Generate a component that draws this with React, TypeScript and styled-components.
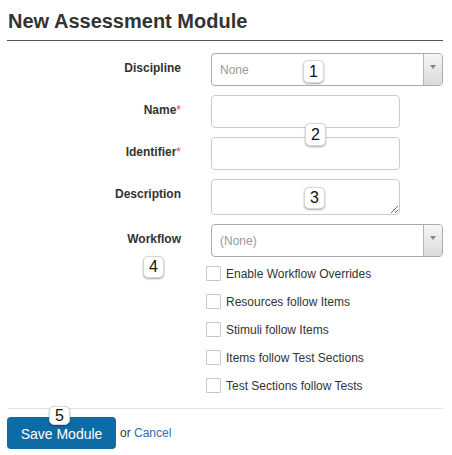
import React from "react";
import styled, { createGlobalStyle } from "styled-components";

const GlobalStyle = createGlobalStyle`
  body {
    margin: 0;
    background: #fff;
    font-family: "Liberation Sans", Arial, sans-serif;
    color: #333;
  }
`;

const Page = styled.div`
  position: relative;
  width: 436px;
  padding: 0 9px 0 7px;
`;

const Title = styled.h1`
  margin: 0;
  padding: 9px 0 7px 1px;
  font-size: 20px;
  line-height: 24px;
  font-weight: bold;
  color: #333;
  border-bottom: 1px solid #555;
`;

const Form = styled.div`
  display: grid;
  grid-template-columns: 174px 232px;
  column-gap: 30px;
  row-gap: 9px;
  margin-top: 12px;
`;

const Label = styled.label`
  justify-self: end;
  padding-top: 7px;
  font-size: 12px;
  line-height: 16px;
  font-weight: bold;
  color: #333;
`;

const Required = styled.span`
  color: #e0474c;
  font-weight: normal;
`;

const SelectBox = styled.div`
  display: flex;
  height: 33px;
  box-sizing: border-box;
  border: 1px solid #aaa;
  border-radius: 4px;
  overflow: hidden;
`;

const SelectValue = styled.span`
  flex: 1;
  display: flex;
  align-items: center;
  padding-left: 8px;
  font-size: 12px;
  color: #999;
`;

const SelectArrow = styled.span`
  width: 19px;
  display: flex;
  justify-content: center;
  padding-top: 11px;
  box-sizing: border-box;
  border-left: 1px solid #b5b5b5;
  background: linear-gradient(#f6f6f6, #dadada);

  &::after {
    content: "";
    width: 0;
    height: 0;
    border-left: 3px solid transparent;
    border-right: 3px solid transparent;
    border-top: 4px solid #888;
  }
`;

const TextInput = styled.input<{ $tall?: boolean }>`
  width: 189px;
  height: 33px;
  box-sizing: border-box;
  margin: 0;
  border: 1px solid #ccc;
  border-radius: 4px;
  padding: 4px 8px;
  font: 12px "Liberation Sans", Arial, sans-serif;
  outline: none;
`;

const TextArea = styled.textarea`
  display: block;
  width: 189px;
  height: 36px;
  box-sizing: border-box;
  margin: 0;
  border: 1px solid #ccc;
  border-radius: 4px;
  padding: 4px 8px;
  font: 12px "Liberation Sans", Arial, sans-serif;
  resize: both;
  outline: none;
`;

const CheckList = styled.div`
  grid-column: 2;
  display: flex;
  flex-direction: column;
  gap: 13px;
  margin-left: -5px;
`;

const CheckRow = styled.label`
  display: flex;
  align-items: center;
  gap: 5px;
  height: 15px;
  font-size: 12px;
  color: #333;
`;

const CheckBox = styled.input`
  appearance: none;
  margin: 0;
  width: 15px;
  height: 15px;
  box-sizing: border-box;
  border: 1px solid #c8c8c8;
  border-radius: 1px;
  background: #fff;
`;

const Footer = styled.div`
  display: flex;
  align-items: center;
  gap: 4px;
  margin-top: 15px;
  padding-top: 8px;
  border-top: 1px solid #e3e3e3;
  font-size: 12px;
  color: #333;
`;

const SaveButton = styled.button`
  width: 109px;
  height: 32px;
  border: none;
  border-radius: 4px;
  background: #0d6ba6;
  color: #fff;
  font: 14px "Liberation Sans", Arial, sans-serif;
  padding: 2px 0 0;
`;

const CancelLink = styled.a`
  color: #2b6fb6;
  text-decoration: none;
`;

const Badge = styled.span<{ $x: number; $y: number; $h?: number }>`
  position: absolute;
  left: ${({ $x }) => $x}px;
  top: ${({ $y }) => $y}px;
  width: 21px;
  height: ${({ $h }) => $h ?? 22}px;
  display: flex;
  align-items: center;
  justify-content: center;
  box-sizing: border-box;
  background: #fff;
  border: 1px solid #d6d6d6;
  border-radius: 5px;
  box-shadow: 0 1px 2px rgba(0, 0, 0, 0.35);
  font: 16px "Liberation Sans", Arial, sans-serif;
  color: #111;
`;

const checks = [
  "Enable Workflow Overrides",
  "Resources follow Items",
  "Stimuli follow Items",
  "Items follow Test Sections",
  "Test Sections follow Tests",
];

export default function App() {
  return (
    <Page>
      <GlobalStyle />
      <Title>New Assessment Module</Title>
      <Form>
        <Label>Discipline</Label>
        <SelectBox>
          <SelectValue>None</SelectValue>
          <SelectArrow />
        </SelectBox>

        <Label>
          Name<Required>*</Required>
        </Label>
        <TextInput />

        <Label>
          Identifier<Required>*</Required>
        </Label>
        <TextInput />

        <Label>Description</Label>
        <div>
          <TextArea />
        </div>

        <Label>Workflow</Label>
        <SelectBox>
          <SelectValue>(None)</SelectValue>
          <SelectArrow />
        </SelectBox>

        <CheckList>
          {checks.map((c) => (
            <CheckRow key={c}>
              <CheckBox type="checkbox" />
              {c}
            </CheckRow>
          ))}
        </CheckList>
      </Form>
      <Footer>
        <SaveButton>Save Module</SaveButton>
        <span>
          or <CancelLink href="#">Cancel</CancelLink>
        </span>
      </Footer>

      <Badge $x={303} $y={60} $h={23}>1</Badge>
      <Badge $x={305} $y={123} $h={23}>2</Badge>
      <Badge $x={304} $y={187}>3</Badge>
      <Badge $x={143} $y={256}>4</Badge>
      <Badge $x={49} $y={406} $h={19}>5</Badge>
    </Page>
  );
}
